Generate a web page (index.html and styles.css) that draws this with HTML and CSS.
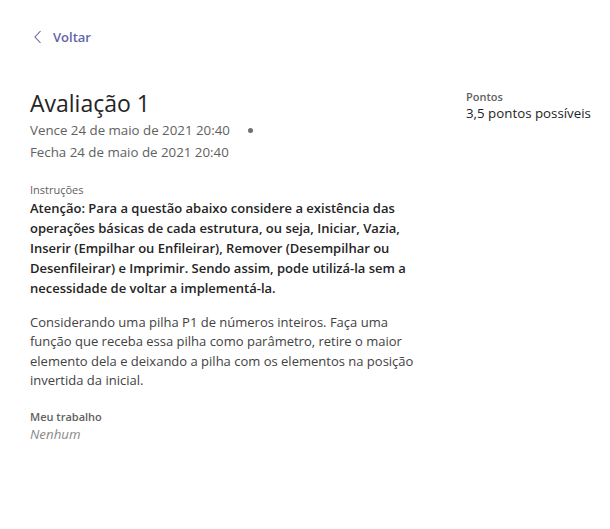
FILE: index.html
```html
<!DOCTYPE html>
<html lang="pt">
<head>
<meta charset="utf-8">
<link rel="stylesheet" href="styles.css">
</head>
<body>
<div class="page">
  <a class="back" href="#">
    <svg class="chev" width="8" height="14" viewBox="0 0 8 14"><path d="M6.5 1 L1 7 L6.5 13" fill="none" stroke="#6264a7" stroke-width="1.1"/></svg>
    <span>Voltar</span>
  </a>
  <div class="layout">
    <main class="main">
      <h1 class="title">Avaliação 1</h1>
      <div class="date">Vence 24 de maio de 2021 20:40<span class="dot"></span></div>
      <div class="date">Fecha 24 de maio de 2021 20:40</div>
      <section class="section instr">
        <div class="label">Instruções</div>
        <p class="bold">Atenção: Para a questão abaixo considere a existência das operações básicas de cada estrutura, ou seja, Iniciar, Vazia, Inserir (Empilhar ou Enfileirar), Remover (Desempilhar ou Desenfileirar) e Imprimir. Sendo assim, pode utilizá-la sem a necessidade de voltar a implementá-la.</p>
        <p class="text">Considerando uma pilha P1 de números inteiros. Faça uma função que receba essa pilha como parâmetro, retire o maior elemento dela e deixando a pilha com os elementos na posição invertida da inicial.</p>
      </section>
      <section class="section work">
        <div class="label strong">Meu trabalho</div>
        <div class="none">Nenhum</div>
      </section>
    </main>
    <aside class="side">
      <div class="label strong side-label">Pontos</div>
      <div class="points">3,5 pontos possíveis</div>
    </aside>
  </div>
</div>
</body>
</html>
```
FILE: styles.css
```css
* { box-sizing: border-box; }
html, body { margin: 0; padding: 0; background: #fff; }
body {
  font-family: "Open Sans", "Noto Sans", sans-serif;
  color: #242424;
  overflow: hidden;
}
.page { padding: 27px 0 0 30px; width: 610px; }
.back {
  display: flex;
  align-items: center;
  gap: 11px;
  text-decoration: none;
  color: #6264a7;
  font-size: 13px;
  font-weight: 600;
  height: 20px;
  margin-left: 4px;
}
.layout {
  display: flex;
  margin-top: 41px;
}
.main { flex: 0 0 436px; padding-right: 41px; }
.title {
  font-size: 23px;
  font-weight: 400;
  line-height: 30px;
  margin: 0 0 1px;
  color: #242424;
}
.date {
  font-size: 13.3px;
  line-height: 22px;
  color: #616161;
  display: flex;
  align-items: center;
}
.dot {
  width: 5px; height: 5px; border-radius: 50%;
  background: #707070;
  margin-left: 18px;
}
.section { margin-top: 18px; }
.label { font-size: 11px; line-height: 17px; color: #616161; }
.label.strong { font-weight: 600; }
.bold {
  margin: 0;
  font-size: 13px;
  font-weight: 600;
  line-height: 20px;
  color: #242424;
}
.text {
  margin: 15px 0 0;
  font-size: 13px;
  line-height: 19.3px;
  color: #424242;
}
.work { margin-top: 18px; }
.none { font-size: 13.3px; font-style: italic; color: #8a8a8a; line-height: 19px; }
.side { padding-top: 2px; white-space: nowrap; }
.side-label { line-height: 14px; }
.points { font-size: 13.3px; line-height: 19px; color: #242424; }
```
